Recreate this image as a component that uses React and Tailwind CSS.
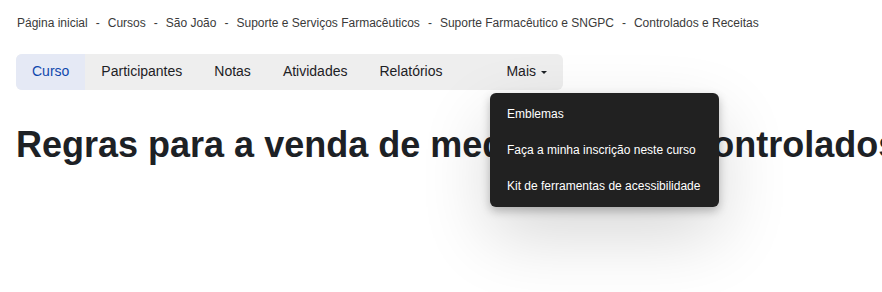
const crumbs = [
  "Página inicial",
  "Cursos",
  "São João",
  "Suporte e Serviços Farmacêuticos",
  "Suporte Farmacêutico e SNGPC",
  "Controlados e Receitas",
];

const tabs = ["Curso", "Participantes", "Notas", "Atividades", "Relatórios"];

const moreItems = [
  "Emblemas",
  "Faça a minha inscrição neste curso",
  "Kit de ferramentas de acessibilidade",
];

const App = () => {
  return (
    <div className="w-[882px] h-[292px] overflow-hidden bg-white font-['Liberation_Sans',Arial,sans-serif] text-[#1d2125]">
      <nav className="flex items-center gap-2 pl-[17px] pt-[14px] text-[12px] leading-[18px] text-[#3a3a3a]">
        {crumbs.map((c, i) => (
          <span key={c} className="flex items-center gap-2">
            {i > 0 && <span>-</span>}
            <span>{c}</span>
          </span>
        ))}
      </nav>

      <div className="relative ml-4 mt-[22px] flex h-9 w-[547px] items-center rounded-md bg-[#eeeeee] text-[14px]">
        {tabs.map((t, i) => (
          <a
            key={t}
            className={
              i === 0
                ? "flex h-full items-center rounded-l-md bg-[#e5e9f5] px-4 pb-px text-[#0f47ad]"
                : "flex h-full items-center px-4 pb-px"
            }
          >
            {t}
          </a>
        ))}
        <a className="ml-auto flex h-full items-center px-4 pb-px">
          Mais
          <span className="ml-[5px] mt-px h-0 w-0 border-x-[3px] border-t-[3px] border-x-transparent border-t-[#1d2125]" />
        </a>

        <div className="absolute left-[474px] top-[39px] z-10 w-[229px] rounded-md bg-[#212121] pb-[3px] pt-[3px] text-[12px] text-white shadow-[0_4px_10px_rgba(0,0,0,0.25),0_28px_70px_rgba(0,0,0,0.16)]">
          {moreItems.map((m) => (
            <div key={m} className="flex h-9 items-center px-[17px]">
              {m}
            </div>
          ))}
        </div>
      </div>

      <h1 className="mt-[33px] whitespace-nowrap pl-4 text-[36px] font-bold leading-[1.2]">
        Regras para a venda de medicamentos controlados
      </h1>
    </div>
  );
};

export default App;
